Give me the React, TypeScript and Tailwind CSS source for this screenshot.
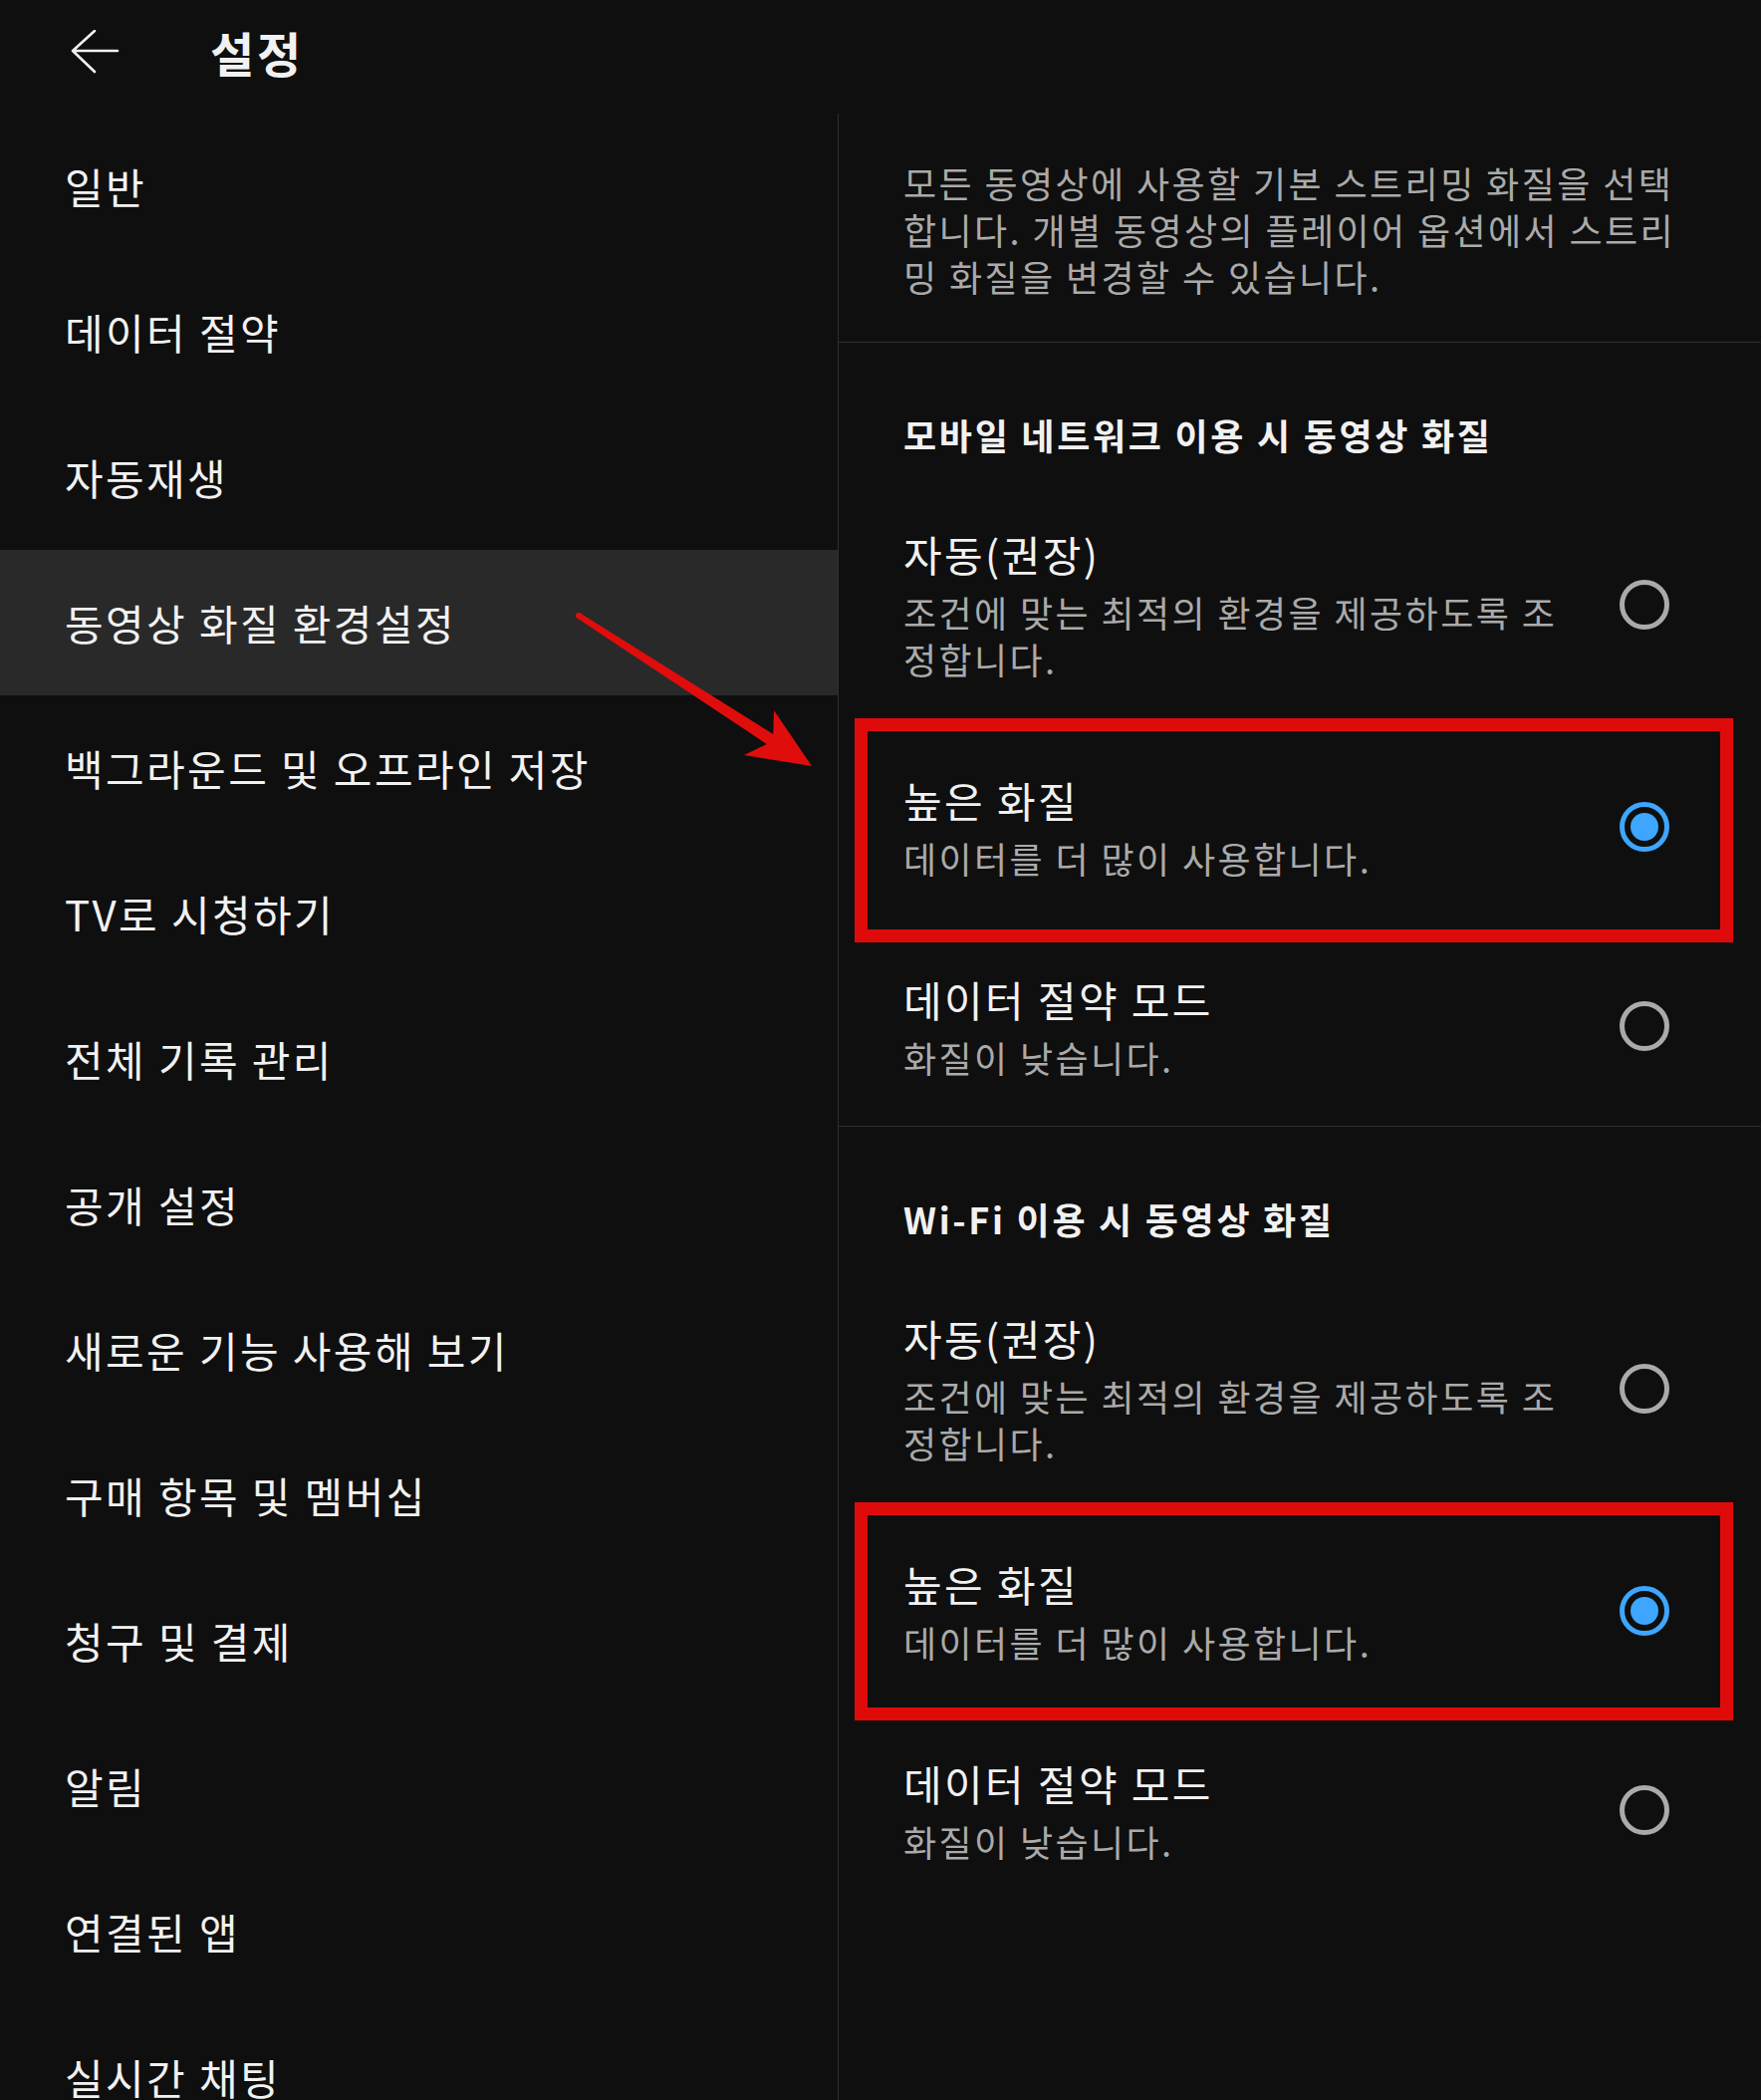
const menu = [
  "일반",
  "데이터 절약",
  "자동재생",
  "동영상 화질 환경설정",
  "백그라운드 및 오프라인 저장",
  "TV로 시청하기",
  "전체 기록 관리",
  "공개 설정",
  "새로운 기능 사용해 보기",
  "구매 항목 및 멤버십",
  "청구 및 결제",
  "알림",
  "연결된 앱",
  "실시간 채팅",
]

const ACTIVE = "동영상 화질 환경설정"

function Radio({ checked }: { checked?: boolean }) {
  if (checked) {
    return (
      <div className="w-[50px] h-[50px] rounded-full border-[5px] border-[#3ea6ff] flex items-center justify-center shrink-0">
        <div className="w-[28px] h-[28px] rounded-full bg-[#3ea6ff]" />
      </div>
    )
  }
  return <div className="w-[50px] h-[50px] rounded-full border-[5px] border-[#aaaaaa] shrink-0" />
}

function Option({
  title,
  sub,
  checked,
  box,
}: {
  title: string
  sub: string
  checked?: boolean
  box?: "first" | "second"
}) {
  return (
    <div className="relative flex items-center py-[45px] pl-[65px] pr-[92px]">
      <div className="w-[680px]">
        <div className="text-[42px] leading-[56px] tracking-[2.4px] text-[#f1f1f1]">{title}</div>
        <div className="mt-[7px] text-[36px] leading-[47px] tracking-[2.4px] text-[#aaaaaa]">{sub}</div>
      </div>
      <div className="ml-auto">
        <Radio checked={checked} />
      </div>
      {box === "first" && (
        <div className="absolute left-[16px] right-[28px] -top-[9px] -bottom-[16px] border-[13px] border-[#df0b0b] pointer-events-none" />
      )}
      {box === "second" && (
        <div className="absolute left-[16px] right-[28px] -top-[9px] -bottom-[10px] border-[13px] border-[#df0b0b] pointer-events-none" />
      )}
    </div>
  )
}

function Section({ heading, last }: { heading: string; last?: boolean }) {
  return (
    <div className={last ? "" : "border-b border-[#303030]"}>
      <div className="pt-[69px] pb-[23px] px-[65px] text-[36px] leading-[47px] font-bold tracking-[2.7px] text-[#f1f1f1]">
        {heading}
      </div>
      <Option title="자동(권장)" sub="조건에 맞는 최적의 환경을 제공하도록 조정합니다." />
      <Option
        title="높은 화질"
        sub="데이터를 더 많이 사용합니다."
        checked
        box={last ? "second" : "first"}
      />
      <Option title="데이터 절약 모드" sub="화질이 낮습니다." />
    </div>
  )
}

export default function App() {
  return (
    <div
      className="relative w-[1768px] h-[2108px] overflow-hidden bg-[#0f0f0f] text-[#f1f1f1] flex flex-col"
      style={{ fontFamily: '"Noto Sans CJK KR", "Noto Sans", sans-serif' }}
    >
      {/* header */}
      <header className="h-[114px] shrink-0 flex items-center pt-[2px]">
        <svg className="ml-[70px] -mt-[10px]" width="50" height="46" viewBox="0 0 50 46" fill="none">
          <path d="M48 21H3M25 1L3 21L25 42" stroke="#f1f1f1" strokeWidth="2.6" strokeLinecap="round" strokeLinejoin="round" />
        </svg>
        <h1 className="ml-[91px] -mt-[12px] text-[48px] leading-[64px] font-bold tracking-[0.06em]">설정</h1>
      </header>

      <div className="flex flex-1 min-h-0">
        {/* left menu */}
        <nav className="w-[842px] shrink-0 border-r border-[#303030]">
          {menu.map((m) => (
            <div
              key={m}
              className={
                "h-[146px] flex items-center pl-[65px] text-[42px] leading-[56px] tracking-[2.4px] " +
                (m === ACTIVE ? "bg-[#292929]" : "")
              }
            >
              {m}
            </div>
          ))}
        </nav>

        {/* right panel */}
        <main className="flex-1">
          <p className="pt-[46px] pb-[42px] px-[65px] text-[36px] leading-[47px] tracking-[2.4px] text-[#aaaaaa] border-b border-[#303030]">
            모든 동영상에 사용할 기본 스트리밍 화질을 선택합니다. 개별 동영상의 플레이어 옵션에서 스트리밍 화질을 변경할 수 있습니다.
          </p>
          <Section heading="모바일 네트워크 이용 시 동영상 화질" />
          <Section heading="Wi-Fi 이용 시 동영상 화질" last />
        </main>
      </div>

      {/* red annotation arrow */}
      <svg className="absolute left-0 top-0 pointer-events-none" width="1768" height="2108" viewBox="0 0 1768 2108">
        <polygon
          points="582.6,615.5 776.3,736.9 777,713 815,769 747,758 769.7,746.9 579.4,620.5"
          fill="#e00d0d"
        />
        <circle cx="581" cy="618" r="3" fill="#e00d0d" />
      </svg>
    </div>
  )
}
